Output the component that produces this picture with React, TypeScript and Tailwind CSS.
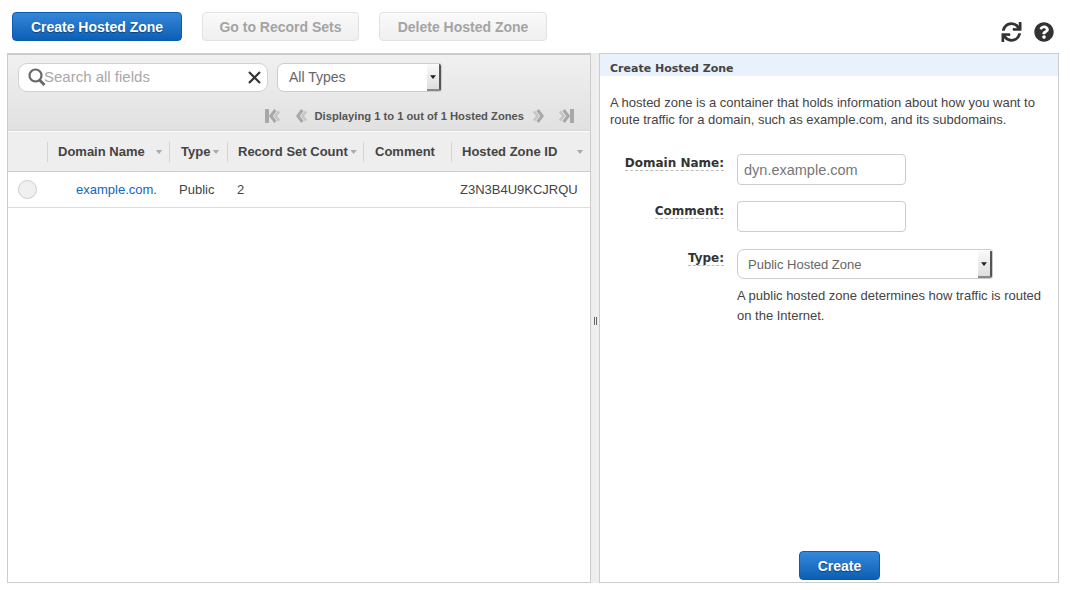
import { FaSync, FaQuestionCircle } from "react-icons/fa";

const SANS = "font-['Liberation_Sans',Arial,sans-serif]";
const COLUMNS = "grid grid-cols-[39px_122px_58px_136px_88px_1fr]";

function Caret({ className = "" }: { className?: string }) {
  return (
    <svg width="8" height="5" viewBox="0 0 8 5" className={className}>
      <path d="M0 0h8L4 5z" fill="currentColor" />
    </svg>
  );
}

function SelectBox({ label, className }: { label: string; className: string }) {
  return (
    <div className={`flex items-stretch bg-white border border-[#ccc] rounded-l-[7px] rounded-r-[3px] overflow-hidden ${className}`}>
      <span className="flex-1 self-center">{label}</span>
      <span className="w-[14px] flex items-center justify-center bg-gradient-to-b from-[#fafafa] to-[#dedede] border-r-2 border-b-2 border-r-[#555] border-b-[#888] text-[#222]">
        <Caret className="w-[6px] h-[4px]" />
      </span>
    </div>
  );
}

function PageArrow({ dir, bar, className = "" }: { dir: "left" | "right"; bar?: boolean; className?: string }) {
  const flip = dir === "right" ? "-scale-x-100" : "";
  return (
    <svg width={bar ? 15 : 11} height="14" viewBox={bar ? "0 0 15 14" : "0 0 11 14"} fill="none" className={`shrink-0 ${flip} ${className}`}>
      {bar && <rect x="0" y="0" width="4" height="14" fill="#a8a8a8" />}
      <g transform={bar ? "translate(4 0)" : undefined}>
        <path d="M10.2 2.4 6.4 7l3.8 4.6" stroke="#c6c6c6" strokeWidth="2.6" />
        <path d="M6.4 1 1.8 7l4.6 6" stroke="#a8a8a8" strokeWidth="3" />
      </g>
    </svg>
  );
}

function HeaderCell({ label, caret, first, tight, wide }: { label?: string; caret?: boolean; first?: boolean; tight?: boolean; wide?: boolean }) {
  return (
    <div className={`flex items-center h-[20px] ${wide ? "pl-[11px]" : "pl-[10px]"} pr-[6px] ${first ? "" : "border-l border-l-[#d4d4d4]"}`}>
      {label && <span className="font-bold text-[13px] text-[#444] whitespace-nowrap">{label}</span>}
      {caret && <Caret className={`${tight ? "ml-[2px]" : "ml-auto"} text-[#aaa] w-[8px] h-[4px]`} />}
    </div>
  );
}

function Label({ text }: { text: string }) {
  return (
    <div className="flex justify-end w-[114px] pt-[2px]">
      <span className="font-['DejaVu_Sans',Verdana,sans-serif] font-bold text-[12px] leading-[14px] text-[#333] border-b border-dashed border-b-[#bbb]">
        {text}
      </span>
    </div>
  );
}

export default function App() {
  return (
    <div className={`${SANS} w-[1070px] h-[590px] bg-white overflow-hidden flex flex-col px-[7px] pb-[7px]`}>
      <div className="h-[53px] flex items-start pt-[12px] pl-[5px] pr-[9px] gap-[20px] shrink-0">
        <button className="w-[170px] h-[29px] pt-[1px] rounded-[4px] bg-gradient-to-b from-[#3487da] to-[#0a5fb4] border border-[#0d5cab] text-white font-bold text-[14px] [text-shadow:0_1px_1px_#0006]">
          Create Hosted Zone
        </button>
        <button className="w-[157px] h-[29px] pt-[1px] rounded-[4px] bg-gradient-to-b from-[#fafafa] to-[#efefef] border border-[#e2e2e2] text-[#a4a4a4] font-bold text-[14px]">
          Go to Record Sets
        </button>
        <button className="w-[168px] h-[29px] pt-[1px] rounded-[4px] bg-gradient-to-b from-[#fafafa] to-[#efefef] border border-[#e2e2e2] text-[#a4a4a4] font-bold text-[14px]">
          Delete Hosted Zone
        </button>
        <div className="ml-auto flex items-center gap-[12px] pt-[10px] text-[#333]">
          <FaSync className="w-[21px] h-[20px]" />
          <FaQuestionCircle className="w-[20px] h-[20px]" />
        </div>
      </div>

      <div className="flex-1 flex min-h-0">
        <div className="w-[584px] flex flex-col border border-[#ccc] border-t-2 bg-white">
          <div className="h-[76px] px-[10px] pt-[8px] bg-gradient-to-b from-[#f0f0f0] to-[#e1e1e1] border-b border-b-[#d6d6d6] shrink-0">
            <div className="flex gap-[9px]">
              <div className="w-[250px] h-[29px] flex items-center bg-white border border-[#d2d2d2] rounded-[9px] pl-[9px] pr-[5px]">
                <svg width="18" height="19" viewBox="0 0 18 19" fill="none" className="shrink-0 -mt-[1px] -mr-[2px]">
                  <circle cx="7.5" cy="7.5" r="6" stroke="#666" strokeWidth="2.2" />
                  <path d="m11.5 12 5 5" stroke="#666" strokeWidth="2.8" />
                </svg>
                <span className="text-[15px] text-[#a8a8a8] flex-1">Search all fields</span>
                <svg width="15" height="15" viewBox="0 0 15 15" className="shrink-0">
                  <path d="m2 2 11 11M13 2 2 13" stroke="#333" strokeWidth="2.2" />
                </svg>
              </div>
              <SelectBox label="All Types" className="w-[165px] h-[29px] pl-[11px] text-[14px] text-[#666]" />
            </div>
            <div className="flex justify-end items-center h-[14px] mt-[17px] pr-[6px]">
              <PageArrow dir="left" bar className="mr-[16px]" />
              <PageArrow dir="left" className="mr-[8px]" />
              <span className="font-bold text-[11.2px] text-[#555] whitespace-nowrap mr-[9px]">
                Displaying 1 to 1 out of 1 Hosted Zones
              </span>
              <PageArrow dir="right" className="mr-[15px]" />
              <PageArrow dir="right" bar />
            </div>
          </div>

          <div className={`${COLUMNS} h-[41px] items-center bg-[#eee] border-t border-t-white border-b border-b-[#ccc] shrink-0`}>
            <HeaderCell first />
            <HeaderCell label="Domain Name" caret />
            <HeaderCell label="Type" caret tight wide />
            <HeaderCell label="Record Set Count" caret tight />
            <HeaderCell label="Comment" wide />
            <HeaderCell label="Hosted Zone ID" caret />
          </div>

          <div className={`${COLUMNS} h-[36px] items-center border-b border-b-[#ddd] text-[13px] text-[#444] shrink-0`}>
            <div className="pl-[10px]">
              <div className="w-[19px] h-[19px] rounded-full border border-[#ccc] bg-[#f0f0f0]" />
            </div>
            <a className="pl-[29px] text-[#1166bb] whitespace-nowrap">example.com.</a>
            <div className="pl-[10px]">Public</div>
            <div className="pl-[10px]">2</div>
            <div />
            <div className="pl-[9px] whitespace-nowrap">Z3N3B4U9KCJRQU</div>
          </div>
        </div>

        <div className="w-[8px] flex items-center justify-center bg-[#eee] shrink-0">
          <div className="flex gap-[1px] h-[8px] mt-[6px]">
            <span className="w-px bg-[#666]" />
            <span className="w-px bg-[#666]" />
          </div>
        </div>

        <div className="w-[460px] flex flex-col border border-[#ccc] bg-white">
          <div className="h-[22px] pl-[10px] pt-[9px] flex items-center bg-[#e9f1fc] font-['DejaVu_Sans',Verdana,sans-serif] font-bold text-[11px] text-[#444] shrink-0">
            Create Hosted Zone
          </div>
          <p className="mx-[10px] mt-[18px] text-[13px] leading-[17px] text-[#444]">
            A hosted zone is a container that holds information about how you want to route traffic for a domain, such as example.com, and its subdomains.
          </p>
          <div className="mt-[26px] flex flex-col">
            <div className="flex items-start gap-[13px] pl-[10px]">
              <Label text="Domain Name:" />
              <div className="w-[169px] h-[31px] pt-[2px] flex items-center px-[6px] border border-[#ccc] rounded-[4px] text-[14.5px] text-[#777]">
                dyn.example.com
              </div>
            </div>
            <div className="flex items-start gap-[13px] pl-[10px] mt-[16px]">
              <div className="pt-[1px]">
                <Label text="Comment:" />
              </div>
              <div className="w-[169px] h-[31px] border border-[#ccc] rounded-[4px]" />
            </div>
            <div className="flex items-start gap-[13px] pl-[10px] mt-[17px]">
              <Label text="Type:" />
              <div className="flex flex-col w-[309px]">
                <SelectBox label="Public Hosted Zone" className="w-[256px] h-[30px] pl-[10px] pt-[1px] text-[13px] text-[#666] rounded-l-[4px]" />
                <p className="mt-[7px] text-[13px] leading-[20px] text-[#444]">
                  A public hosted zone determines how traffic is routed on the Internet.
                </p>
              </div>
            </div>
          </div>
          <div className="mt-auto flex justify-center pb-[2px] pl-[21px]">
            <button className="w-[81px] h-[29px] pt-[1px] rounded-[4px] bg-gradient-to-b from-[#3487da] to-[#0a5fb4] border border-[#0d5cab] text-white font-bold text-[14px] [text-shadow:0_1px_1px_#0006]">
              Create
            </button>
          </div>
        </div>
      </div>
    </div>
  );
}
